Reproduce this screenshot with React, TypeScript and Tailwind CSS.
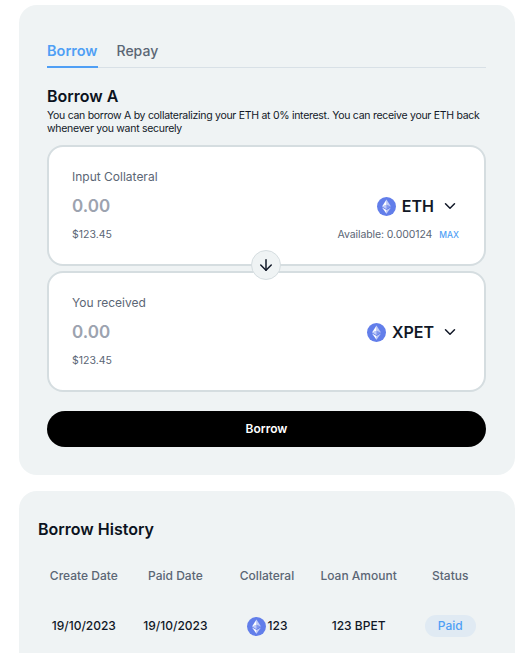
import { ChevronDown, ArrowDown } from 'lucide-react';

function EthIcon({ size = 19 }: { size?: number }) {
  return (
    <svg width={size} height={size} viewBox="0 0 32 32" className="shrink-0">
      <circle cx="16" cy="16" r="16" fill="#627eea" />
      <path d="M16 4v8.9l7.5 3.3z" fill="#fff" fillOpacity="0.6" />
      <path d="M16 4L8.5 16.2l7.5-3.3z" fill="#fff" />
      <path d="M16 22v6l7.5-10.4z" fill="#fff" fillOpacity="0.6" />
      <path d="M16 28v-6l-7.5-4.4z" fill="#fff" />
      <path d="M16 20.6l7.5-4.4-7.5-3.3z" fill="#fff" fillOpacity="0.2" />
      <path d="M8.5 16.2l7.5 4.4v-7.7z" fill="#fff" fillOpacity="0.6" />
    </svg>
  );
}

function AssetCard({
  label,
  token,
  available,
}: {
  label: string;
  token: string;
  available?: boolean;
}) {
  return (
    <div className="h-[121px] rounded-[16px] border-2 border-[#d5dde0] bg-white pl-[23px] pr-[25px] pt-[21px]">
      <div className="text-[12px] leading-[18px] text-[#5b6675]">{label}</div>
      <div className="mt-[8px] flex h-[24px] items-center justify-between">
        <span className="pt-[1px] text-[17px] font-semibold text-[#9ca3af]">0.00</span>
        <div className="flex items-center">
          <EthIcon />
          <span className="ml-[6px] text-[16px] font-semibold text-[#111827]">{token}</span>
          <ChevronDown className="ml-[7px] h-[18px] w-[18px] text-[#111827]" strokeWidth={2} />
        </div>
      </div>
      <div className="mt-[9px] flex items-center justify-between text-[10.5px] leading-[16px] text-[#5b6675]">
        <span>$123.45</span>
        {available && (
          <span className="flex items-center">
            <span className="tracking-[-0.1px]">Available: 0.000124</span>
            <span className="ml-[7px] text-[8.5px] font-medium text-[#4f9ff5]">MAX</span>
          </span>
        )}
      </div>
    </div>
  );
}

const headers = ['Create Date', 'Paid Date', 'Collateral', 'Loan Amount', 'Status'];

export default function App() {
  return (
    <div className="h-[653px] overflow-hidden bg-white pl-[19px] pr-[14px] pt-[5px] font-['Inter',sans-serif]">
      {/* Borrow panel */}
      <div className="h-[470px] rounded-[18px] bg-[#eff3f4] pl-[28px] pr-[29px] pt-[36px]">
        <div className="flex border-b border-[#d8e0e6]">
          <div className="mb-[-1px] h-[27px] border-b-2 border-[#4f9ff5] text-[14.5px] font-semibold leading-[20px] text-[#4f9ff5]">
            Borrow
          </div>
          <div className="ml-[19px] text-[14px] font-medium leading-[20px] text-[#5b6675]">Repay</div>
        </div>

        <h2 className="mt-[17px] text-[16px] font-semibold leading-[22px] text-[#0b1220]">Borrow A</h2>
        <p className="mt-[2px] text-[10.5px] leading-[13px] tracking-[-0.28px] text-[#111827]">
          You can borrow A by collateralizing your ETH at 0% interest. You can receive your ETH back whenever you
          want securely
        </p>

        <div className="relative mt-[10px] flex flex-col gap-[5px]">
          <AssetCard label="Input Collateral" token="ETH" available />
          <AssetCard label="You received" token="XPET" />
          <div className="absolute left-[204px] top-[105px] flex h-[30px] w-[30px] items-center justify-center rounded-full border border-[#d5dde0] bg-[#eff3f4]">
            <ArrowDown className="h-[18px] w-[18px] text-[#111827]" strokeWidth={2} />
          </div>
        </div>

        <button className="mt-[19px] h-[36px] w-full rounded-[18px] bg-black text-[12px] font-semibold text-white">
          Borrow
        </button>
      </div>

      {/* History panel */}
      <div className="mt-[16px] h-[200px] rounded-[18px] bg-[#eff3f4] px-[19px] pt-[27px]">
        <h2 className="text-[16px] font-semibold leading-[22px] text-[#0b1220]">Borrow History</h2>
        <div className="mt-[27px] grid grid-cols-5 text-center text-[12px] font-medium leading-[18px] text-[#5b6675]">
          {headers.map((h) => (
            <div key={h}>{h}</div>
          ))}
        </div>
        <div className="mt-[30px] grid grid-cols-5 items-center text-center text-[12px] font-medium text-[#111827]">
          <div>19/10/2023</div>
          <div>19/10/2023</div>
          <div className="flex items-center justify-center gap-[2px]">
            <EthIcon />
            <span>123</span>
          </div>
          <div>123 BPET</div>
          <div className="flex justify-center">
            <span className="flex h-[22px] w-[51px] items-center justify-center rounded-full bg-[#e0eaf3] text-[#4f9ff5]">
              Paid
            </span>
          </div>
        </div>
      </div>
    </div>
  );
}
